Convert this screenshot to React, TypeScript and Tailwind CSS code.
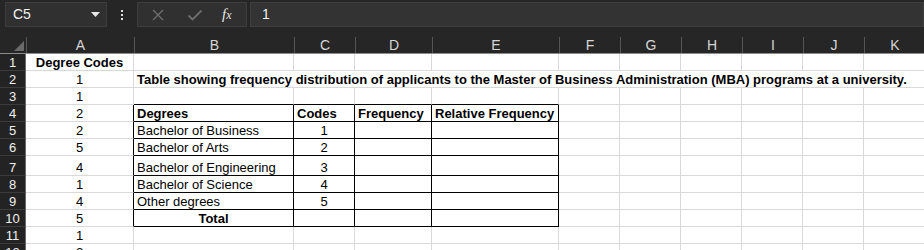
import React from "react";

const COLS = ["A", "B", "C", "D", "E", "F", "G", "H", "I", "J", "K"];

type CellDef = { t: string; b?: boolean; a?: "c" | "l" };

const data: Record<string, CellDef> = {
  A1: { t: "Degree Codes", b: true, a: "c" },
  A2: { t: "1", a: "c" },
  A3: { t: "1", a: "c" },
  A4: { t: "2", a: "c" },
  A5: { t: "2", a: "c" },
  A6: { t: "5", a: "c" },
  A7: { t: "4", a: "c" },
  A8: { t: "1", a: "c" },
  A9: { t: "4", a: "c" },
  A10: { t: "5", a: "c" },
  A11: { t: "1", a: "c" },
  A12: { t: "2", a: "c" },
  B4: { t: "Degrees", b: true },
  C4: { t: "Codes", b: true },
  D4: { t: "Frequency", b: true },
  E4: { t: "Relative Frequency", b: true },
  B5: { t: "Bachelor of Business" },
  B6: { t: "Bachelor of Arts" },
  B7: { t: "Bachelor of Engineering" },
  B8: { t: "Bachelor of Science" },
  B9: { t: "Other degrees" },
  B10: { t: "Total", b: true, a: "c" },
  C5: { t: "1", a: "c" },
  C6: { t: "2", a: "c" },
  C7: { t: "3", a: "c" },
  C8: { t: "4", a: "c" },
  C9: { t: "5", a: "c" },
};

const inTable = (r: number, c: number) => r >= 4 && r <= 10 && c >= 1 && c <= 4;

function Cell({ r, c }: { r: number; c: number }) {
  const d = data[COLS[c] + r];
  const rightBlack = inTable(r, c) || (c === 0 && r >= 4 && r <= 10);
  const bottomBlack = inTable(r, c) || (r === 3 && c >= 1 && c <= 4);
  const cls = [
    "flex items-end overflow-hidden whitespace-nowrap bg-white px-[3px] text-[13px] leading-[14px] text-black border-r border-b",
    rightBlack ? "border-r-black" : "border-r-[#d9d9d9]",
    bottomBlack ? "border-b-black" : "border-b-[#d9d9d9]",
    d?.a === "c" ? "justify-center" : "justify-start",
    d?.b ? "font-bold" : "font-normal",
  ].join(" ");
  return <div className={cls}>{d?.t ?? ""}</div>;
}

function XIcon() {
  return (
    <svg width="14" height="14" viewBox="0 0 14 14" fill="none" stroke="#6e6e6e" strokeWidth="1.4">
      <path d="M2 2 L12 12 M12 2 L2 12" />
    </svg>
  );
}

function CheckIcon() {
  return (
    <svg width="16" height="14" viewBox="0 0 16 14" fill="none" stroke="#6e6e6e" strokeWidth="1.8">
      <path d="M1.5 7.5 L5.5 11.5 L14.5 2.5" />
    </svg>
  );
}

export default function App() {
  const rows = Array.from({ length: 12 }, (_, i) => i + 1);
  return (
    <div className="h-[250px] w-[924px] overflow-hidden bg-[#262626]" style={{ fontFamily: '"Liberation Sans", Arial, sans-serif' }}>
      {/* Top bar */}
      <div className="flex h-[30px] items-start bg-[#262626] pt-[2px]">
        <div className="ml-[5px] flex h-[25px] w-[102px] items-center justify-between border border-[#3e3e3e] bg-[#303030] pl-[7px] pr-[6px]">
          <span className="text-[14px] text-[#f2f2f2]">C5</span>
          <svg width="9" height="6" viewBox="0 0 9 6">
            <path d="M0 0 L9 0 L4.5 5 Z" fill="#e8e8e8" />
          </svg>
        </div>
        <div className="flex h-[25px] w-[30px] flex-col items-center justify-center gap-[2px]">
          <div className="h-[2px] w-[2px] bg-[#e0e0e0]" />
          <div className="h-[2px] w-[2px] bg-[#e0e0e0]" />
          <div className="h-[2px] w-[2px] bg-[#e0e0e0]" />
        </div>
        <div className="flex h-[25px] w-[110px] items-center border border-[#3e3e3e] bg-[#303030] pl-[13px]">
          <XIcon />
          <span className="ml-[22px] flex"><CheckIcon /></span>
          <span
            className="ml-[19px] text-[15px] italic text-[#e6e6e6]"
            style={{ fontFamily: '"Liberation Serif", "Times New Roman", serif' }}
          >
            f<span className="text-[12px]">x</span>
          </span>
        </div>
        <div className="ml-[3px] flex h-[25px] flex-1 items-center border border-[#3e3e3e] bg-[#333333] pl-[11px]">
          <span className="text-[14px] text-[#f2f2f2]">1</span>
        </div>
      </div>

      {/* Sheet grid */}
      <div className="grid grid-cols-[26px_108px_160px_61px_77px_127px_61px_61px_61px_61px_61px_61px] grid-rows-[24px_17px_17px_17px_17px_17px_17px_20px_17px_17px_17px_17px_17px]">
        <div className="flex items-end justify-end border-b border-b-[#8c8c8c] bg-[#262626] pb-[2px] pr-[2px]">
          <svg width="10" height="10" viewBox="0 0 10 10">
            <path d="M10 0 L10 10 L0 10 Z" fill="#6a6a6a" />
          </svg>
        </div>
        {COLS.map((c) => (
          <div key={c} className="flex flex-col justify-end border-b border-b-[#8c8c8c] bg-[#262626]">
            <div className="flex h-[16px] items-end justify-center border-l border-l-[#555555] text-[14px] leading-[15px] text-[#d6d6d6]">
              {c}
            </div>
          </div>
        ))}
        {rows.map((r) => (
          <React.Fragment key={r}>
            <div className="flex items-end justify-center border-b border-r border-b-[#3c3c3c] border-r-[#6a6a6a] bg-[#232323] text-[13px] leading-[14px] text-[#f0f0f0]">
              {r}
            </div>
            {r === 2 ? (
              <>
                <Cell r={2} c={0} />
                <div className="col-span-10 flex items-end overflow-hidden whitespace-nowrap border-b border-r border-b-[#d9d9d9] border-r-[#d9d9d9] bg-white px-[3px] text-[13px] font-bold leading-[14px] text-black">
                  Table showing frequency distribution of applicants to the Master of Business Administration (MBA) programs at a university.
                </div>
              </>
            ) : (
              COLS.map((_, c) => <Cell key={c} r={r} c={c} />)
            )}
          </React.Fragment>
        ))}
      </div>
    </div>
  );
}
